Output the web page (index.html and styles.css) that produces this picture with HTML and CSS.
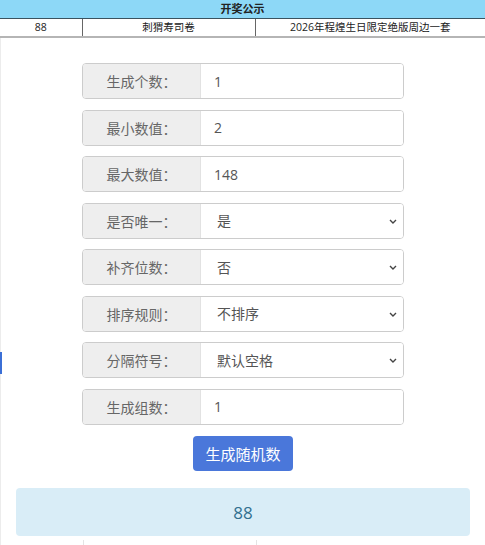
FILE: index.html
```html
<!DOCTYPE html>
<html lang="zh-CN">
  <head>
    <meta charset="UTF-8">
    <meta name="viewport" content="width=device-width, initial-scale=1.0">
    <title>随机数生成器</title>
    <link rel="stylesheet" href="styles.css">
  </head>
  <body>
    <table class="notice">
      <colgroup>
        <col class="col-no">
        <col class="col-name">
        <col>
      </colgroup>
      <thead>
        <tr><th colspan="3">开奖公示</th></tr>
      </thead>
      <tbody>
        <tr>
          <td>88</td>
          <td class="sep">刺猬寿司卷</td>
          <td class="sep">2026年程煌生日限定绝版周边一套</td>
        </tr>
      </tbody>
    </table>

    <div class="page">
      <span class="side-tab"></span>
      <form class="gen-form">
        <div class="input-group">
          <label class="addon" for="count">生成个数：</label>
          <input class="field" type="text" id="count" value="1">
        </div>
        <div class="input-group">
          <label class="addon" for="min">最小数值：</label>
          <input class="field" type="text" id="min" value="2">
        </div>
        <div class="input-group">
          <label class="addon" for="max">最大数值：</label>
          <input class="field" type="text" id="max" value="148">
        </div>
        <div class="input-group">
          <label class="addon" for="unique">是否唯一：</label>
          <select class="field" id="unique">
            <option>是</option>
            <option>否</option>
          </select>
          <svg class="caret" viewBox="0 0 8 5" width="8" height="5"><path d="M1 1l3 3 3-3" fill="none" stroke="#444" stroke-width="1.4"/></svg>
        </div>
        <div class="input-group">
          <label class="addon" for="pad">补齐位数：</label>
          <select class="field" id="pad">
            <option>否</option>
            <option>是</option>
          </select>
          <svg class="caret" viewBox="0 0 8 5" width="8" height="5"><path d="M1 1l3 3 3-3" fill="none" stroke="#444" stroke-width="1.4"/></svg>
        </div>
        <div class="input-group">
          <label class="addon" for="sort">排序规则：</label>
          <select class="field" id="sort">
            <option>不排序</option>
            <option>从小到大</option>
            <option>从大到小</option>
          </select>
          <svg class="caret" viewBox="0 0 8 5" width="8" height="5"><path d="M1 1l3 3 3-3" fill="none" stroke="#444" stroke-width="1.4"/></svg>
        </div>
        <div class="input-group">
          <label class="addon" for="sep">分隔符号：</label>
          <select class="field" id="sep">
            <option>默认空格</option>
            <option>逗号</option>
            <option>换行</option>
          </select>
          <svg class="caret" viewBox="0 0 8 5" width="8" height="5"><path d="M1 1l3 3 3-3" fill="none" stroke="#444" stroke-width="1.4"/></svg>
        </div>
        <div class="input-group">
          <label class="addon" for="groups">生成组数：</label>
          <input class="field" type="text" id="groups" value="1">
        </div>
        <div class="btn-row">
          <button type="button" class="btn-primary">生成随机数</button>
        </div>
      </form>

      <div class="result">88</div>

      <table class="notice notice-next">
        <colgroup>
          <col class="col-no">
          <col class="col-name">
          <col>
        </colgroup>
        <tbody>
          <tr>
            <td></td>
            <td class="sep"></td>
            <td class="sep"></td>
          </tr>
        </tbody>
      </table>
    </div>
  </body>
</html>
```

FILE: styles.css
```css
body {
  margin: 0;
  font-family: "Open Sans", "Noto Sans CJK SC", sans-serif;
  background-color: #fff;
  color: #555;
}

/* top notice table */
.notice {
  width: 100%;
  border-collapse: collapse;
  table-layout: fixed;
  font-size: 10.5px;
  color: #222;
}

.notice .col-no {
  width: 82px;
}

.notice .col-name {
  width: 173px;
}

.notice th {
  height: 18px;
  padding: 0;
  background-color: #8dd8f7;
  border-bottom: 1px solid #3a5360;
  font-size: 11px;
  font-weight: bold;
  text-align: center;
  line-height: 18px;
}

.notice td {
  height: 17px;
  padding: 0;
  text-align: center;
  white-space: nowrap;
  line-height: 17px;
  border-bottom: 2px solid #b5b5b5;
}

.notice .sep {
  border-left: 1px solid #666;
}

.page {
  position: relative;
  border-left: 1px solid #ececec;
  padding-top: 25px;
}

.side-tab {
  position: absolute;
  left: -1px;
  top: 314px;
  width: 2px;
  height: 22px;
  background-color: #3b6fd6;
}

/* generator form */
.gen-form {
  width: 322px;
  margin: 0 auto;
  display: flex;
  flex-direction: column;
  gap: 10.5px;
}

.input-group {
  position: relative;
  display: flex;
  height: 36px;
  border: 1px solid #ccc;
  border-radius: 4px;
  overflow: hidden;
  box-sizing: border-box;
}

.addon {
  width: 117px;
  flex-shrink: 0;
  display: flex;
  align-items: center;
  justify-content: center;
  background-color: #eee;
  border-right: 1px solid #e2e2e2;
  font-size: 14px;
  color: #666;
}

.field {
  flex: 1;
  min-width: 0;
  border: none;
  outline: none;
  padding: 0 13px;
  font-family: inherit;
  font-size: 14px;
  color: #555;
  background-color: #fff;
}

select.field {
  appearance: none;
  padding-left: 16px;
  padding-right: 20px;
}

.caret {
  position: absolute;
  right: 6px;
  top: 15px;
  pointer-events: none;
}

.btn-row {
  display: flex;
  justify-content: center;
  margin-top: 1px;
}

.btn-primary {
  width: 100px;
  height: 35px;
  border: none;
  border-radius: 4px;
  background-color: #4a77da;
  color: #fff;
  font-family: inherit;
  font-size: 15px;
  cursor: pointer;
}

/* output */
.result {
  margin: 17px 15px 0 15px;
  height: 48px;
  display: flex;
  align-items: center;
  justify-content: center;
  background-color: #d9edf7;
  border-radius: 4px;
  color: #31708f;
  font-size: 17px;
}

.notice-next {
  margin-top: 4px;
}

.notice-next td {
  border-bottom: none;
}

.notice-next .sep {
  border-left: 1px solid #e4e4e4;
}
```
